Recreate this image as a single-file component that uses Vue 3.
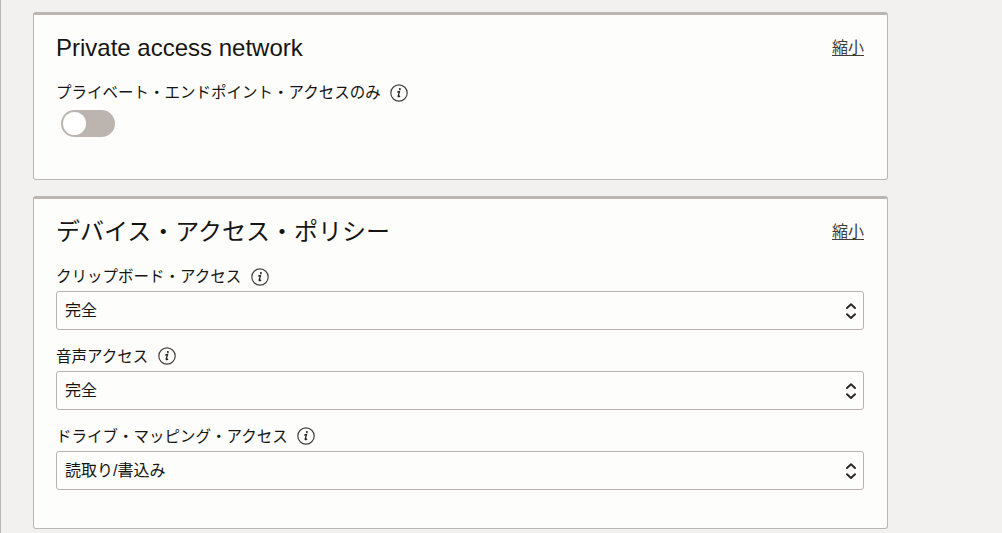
<script setup>
import { ref } from 'vue'

const privateOnly = ref(false)
const policies = [
  { label: 'クリップボード・アクセス', value: '完全' },
  { label: '音声アクセス', value: '完全' },
  { label: 'ドライブ・マッピング・アクセス', value: '読取り/書込み' },
]
</script>

<template>
  <main class="page">
    <section class="card network">
      <header class="head">
        <h2 class="title">Private access network</h2>
        <a class="collapse">縮小</a>
      </header>
      <div class="label-row">
        <span class="label">プライベート・エンドポイント・アクセスのみ</span>
        <svg class="info" viewBox="0 0 18 18">
          <circle cx="9" cy="9" r="8.2" />
          <path class="stem" d="M7.2 8.1 L9.5 7.5 L8.2 12 Q8.1 13 9 12.6 L10.1 11.9" />
          <circle class="dot" cx="9.9" cy="5.1" r="1" />
        </svg>
      </div>
      <button class="switch" :class="{ on: privateOnly }" @click="privateOnly = !privateOnly">
        <span class="knob"></span>
      </button>
    </section>

    <section class="card policy">
      <header class="head">
        <h2 class="title">デバイス・アクセス・ポリシー</h2>
        <a class="collapse">縮小</a>
      </header>
      <div v-for="p in policies" :key="p.label" class="field">
        <div class="label-row">
          <span class="label">{{ p.label }}</span>
          <svg class="info" viewBox="0 0 18 18">
            <circle cx="9" cy="9" r="8.2" />
            <path class="stem" d="M7.2 8.1 L9.5 7.5 L8.2 12 Q8.1 13 9 12.6 L10.1 11.9" />
            <circle class="dot" cx="9.9" cy="5.1" r="1" />
          </svg>
        </div>
        <div class="select">
          <span class="value">{{ p.value }}</span>
          <svg class="arrows" viewBox="0 0 12 18">
            <path d="M2 6 L6 2.2 L10 6 M2 12.2 L6 16 L10 12.2" />
          </svg>
        </div>
      </div>
    </section>
  </main>
</template>

<style>
body {
  background: #f3f1f0;
  overflow: hidden;
}
</style>

<style scoped>
.page {
  box-sizing: border-box;
  height: 533px;
  padding: 12px 114px 0 32px;
  border-left: 1px solid #bcb6b1;
  background: #f3f1f0;
  color: #161513;
  font-family: "Liberation Sans", "Noto Sans CJK JP", sans-serif;
}
.card {
  box-sizing: border-box;
  padding: 0 23px 0 22px;
  border: 1px solid #bcb6b1;
  border-top-width: 3px;
  border-radius: 3px;
  background: #fdfdfb;
}
.network {
  height: 168px;
  margin-bottom: 16px;
}
.policy {
  height: 333px;
}
.head {
  display: flex;
  justify-content: space-between;
  align-items: center;
  height: 66px;
}
.title {
  margin: 0;
  font-size: 24px;
  font-weight: 400;
  line-height: 32px;
}
.policy .title {
  margin-top: -1px;
}
.collapse {
  margin-top: -1px;
  color: #403c38;
  font-size: 16px;
  line-height: 24px;
  text-decoration: underline;
  text-underline-offset: 2px;
}
.label-row {
  display: flex;
  align-items: center;
  gap: 9.5px;
  height: 24px;
}
.label {
  font-size: 15.5px;
  line-height: 24px;
}
.field + .field .label {
  padding-top: 2px;
}
.info {
  width: 18px;
  height: 18px;
  fill: none;
  stroke: #45413e;
  stroke-width: 1.2;
}
.info .stem {
  stroke: #222;
  stroke-width: 1.3;
}
.info .dot {
  fill: #222;
  stroke: none;
}
.switch {
  display: flex;
  align-items: center;
  box-sizing: border-box;
  width: 54px;
  height: 27px;
  margin: 5px 0 0 5px;
  padding: 0 1.5px;
  border: 0;
  border-radius: 14px;
  background: #bbb4af;
}
.switch.on {
  justify-content: flex-end;
}
.knob {
  width: 23px;
  height: 23px;
  border-radius: 50%;
  background: #fff;
}
.field + .field {
  margin-top: 14px;
}
.select {
  display: flex;
  justify-content: space-between;
  align-items: center;
  box-sizing: border-box;
  height: 39px;
  margin-top: 3px;
  padding: 0 6.5px 0 8px;
  border: 1px solid #b8b3af;
  border-radius: 3px;
}
.field:first-of-type .select {
  margin-top: 2px;
}
.value {
  font-size: 16px;
  line-height: 24px;
}
.arrows {
  width: 12px;
  height: 18px;
  margin-top: 1px;
  fill: none;
  stroke: #2b2927;
  stroke-width: 2;
  stroke-linecap: round;
  stroke-linejoin: round;
}
</style>
